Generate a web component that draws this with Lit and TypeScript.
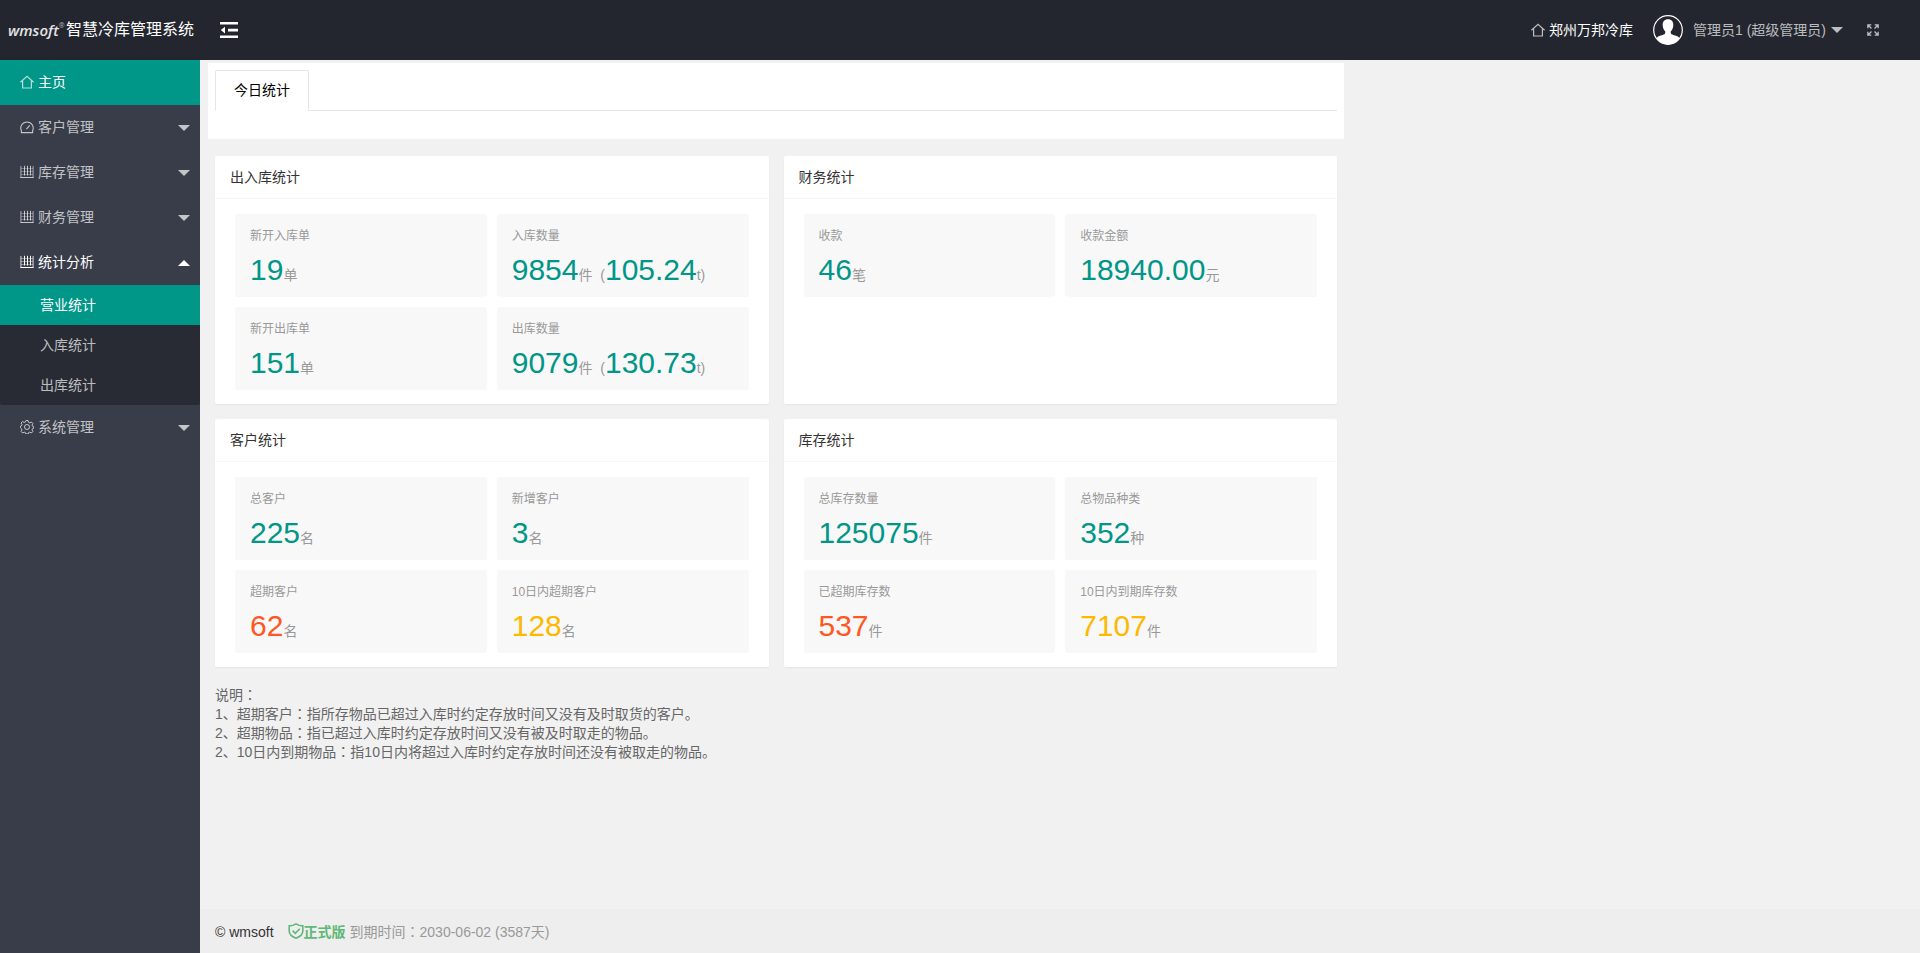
import { LitElement, html, css, svg, nothing } from "lit";
import { customElement, property, state } from "lit/decorators.js";
import { classMap } from "lit/directives/class-map.js";

const ICONS: Record<string, unknown> = {
  home: svg`<path stroke-width="1.200" d="M.4 7.300 7 1.300 13.600 7.300M2.600 5.800v7.200h8.800v-7.200" />`,
  gauge: svg`<path stroke-width="1.100" d="M1.400 10.800A6.200 6.200 0 1 1 12.600 10.800M.8 12.600h12.400M1.400 10.500v2M12.600 10.500v2M6.400 9.200l3.400-3.800" />`,
  table: svg`<path d="M.9 1v12M13.100 1v12" stroke-width=".8" /><path d="M.6 12.500h12.800" /><path d="M4.500 .8v9.700M7.500 .8v9.700M10.500 .8v9.700" /><path d="M1 3.500h12M1 6.500h12M1 9.500h12" stroke-width=".4" />`,
  gear: svg`<circle cx="7" cy="7" r="2.500" /><path d="M5.900 .6h2.200l.5 1.800 1.200.5 1.600-.9 1.500 1.500-.9 1.600.5 1.200 1.300.5v1.400l-1.300.5-.5 1.200.9 1.600-1.500 1.500-1.600-.9-1.200.5-.5 1.400H5.900l-.5-1.400-1.200-.5-1.600.9-1.500-1.500.9-1.600-.5-1.200L.4 7.700V6.300l1.100-.5.500-1.200-.9-1.600 1.500-1.500 1.600.9 1.200-.5z" />`,
  full: svg`<path stroke-width="1.500" d="M1 5V1h4M9 1h4v4M13 9v4H9M5 13H1V9M1.500 1.500l3.700 3.700M12.500 1.500 8.800 5.200M12.500 12.500 8.800 8.800M1.500 12.500l3.700-3.700" />`,
};

const icon = (name: string) =>
  html`<svg class="icon" viewBox="0 0 14 14" aria-hidden="true">${ICONS[name]}</svg>`;

// Full-width colons sit in the middle of their cell.
const withColons = (text: string) =>
  text.split("：").map((part, i) => (i ? html`<span class="colon">：</span>${part}` : part));

interface NavItem {
  label: string;
  icon: string;
  children?: string[];
}

interface Stat {
  label: string;
  parts: [string, string][];
  tone?: "danger" | "warn";
}

interface Group {
  title: string;
  stats: Stat[];
}

const NAV: NavItem[] = [
  { label: "客户管理", icon: "gauge" },
  { label: "库存管理", icon: "table" },
  { label: "财务管理", icon: "table" },
  { label: "统计分析", icon: "table", children: ["营业统计", "入库统计", "出库统计"] },
  { label: "系统管理", icon: "gear" },
];

const GROUPS: Group[] = [
  {
    title: "出入库统计",
    stats: [
      { label: "新开入库单", parts: [["19", "单"]] },
      { label: "入库数量", parts: [["9854", "件\u00a0\u00a0("], ["105.24", "t)"]] },
      { label: "新开出库单", parts: [["151", "单"]] },
      { label: "出库数量", parts: [["9079", "件\u00a0\u00a0("], ["130.73", "t)"]] },
    ],
  },
  {
    title: "财务统计",
    stats: [
      { label: "收款", parts: [["46", "笔"]] },
      { label: "收款金额", parts: [["18940.00", "元"]] },
    ],
  },
  {
    title: "客户统计",
    stats: [
      { label: "总客户", parts: [["225", "名"]] },
      { label: "新增客户", parts: [["3", "名"]] },
      { label: "超期客户", parts: [["62", "名"]], tone: "danger" },
      { label: "10日内超期客户", parts: [["128", "名"]], tone: "warn" },
    ],
  },
  {
    title: "库存统计",
    stats: [
      { label: "总库存数量", parts: [["125075", "件"]] },
      { label: "总物品种类", parts: [["352", "种"]] },
      { label: "已超期库存数", parts: [["537", "件"]], tone: "danger" },
      { label: "10日内到期库存数", parts: [["7107", "件"]], tone: "warn" },
    ],
  },
];

const NOTES = [
  "说明：",
  "1、超期客户：指所存物品已超过入库时约定存放时间又没有及时取货的客户。",
  "2、超期物品：指已超过入库时约定存放时间又没有被及时取走的物品。",
  "2、10日内到期物品：指10日内将超过入库时约定存放时间还没有被取走的物品。",
];

const base = css`
  * {
    box-sizing: border-box;
  }
  a {
    color: inherit;
    text-decoration: none;
  }
  button {
    font: inherit;
    color: inherit;
    background: none;
    border: 0;
    padding: 0;
    cursor: pointer;
  }
  h2,
  h3,
  p,
  ul {
    margin: 0;
    padding: 0;
    font-weight: normal;
    list-style: none;
  }
  .icon {
    display: block;
    flex: none;
    width: 14px;
    height: 14px;
    fill: none;
    stroke: currentColor;
  }
  .caret {
    flex: none;
    width: 0;
    height: 0;
    border: 6px solid transparent;
    border-top-color: currentColor;
    border-bottom-width: 0;
  }
  .caret.up {
    border-width: 0 6px 6px;
    border-bottom-color: currentColor;
  }
`;

@customElement("top-bar")
class TopBar extends LitElement {
  static styles = [
    base,
    css`
      :host {
        display: flex;
        align-items: center;
        height: 60px;
        background: #23262e;
        color: rgba(255, 255, 255, 0.7);
      }
      .brand {
        display: flex;
        align-items: center;
        width: 200px;
        padding-left: 8px;
        color: #fff;
        font-size: 16px;
        line-height: 24px;
        white-space: nowrap;
      }
      .mark {
        display: flex;
        width: 58px;
        font: italic 600 15px/24px "Open Sans", "Noto Sans", sans-serif;
        color: #e4e4e6;
      }
      .reg {
        font-size: 7px;
        line-height: 16px;
        color: #aaa;
      }
      .toggle {
        margin-left: 20px;
        color: #fff;
      }
      .toggle svg {
        display: block;
        width: 18px;
        height: 16px;
        fill: currentColor;
      }
      .right {
        display: flex;
        align-items: center;
        margin-left: auto;
        padding-right: 41px;
      }
      .site,
      .user {
        display: flex;
        align-items: center;
        line-height: 20px;
      }
      .site {
        gap: 4px;
        margin-right: 20px;
      }
      .site span {
        color: #fff;
      }
      .user {
        gap: 10px;
        margin-right: 24px;
      }
      .name {
        display: flex;
        align-items: center;
        gap: 5px;
      }
      .avatar {
        width: 30px;
        height: 30px;
      }
      .full .icon {
        width: 12px;
        height: 12px;
      }
    `,
  ];

  render() {
    return html`
      <a class="brand" href="#">
        <span class="mark">wmsoft<span class="reg">®</span></span>智慧冷库管理系统
      </a>
      <button class="toggle" aria-label="折叠菜单">
        <svg viewBox="0 0 18 16" aria-hidden="true">
          <path d="M0 0h18v2.6H0zM8 6.8h10v2.6H8zM0 13.4h18V16H0zM5 4.8v6.6L.8 8.1z" />
        </svg>
      </button>
      <div class="right">
        <a class="site" href="#">${icon("home")}<span>郑州万邦冷库</span></a>
        <button class="user">
          <svg class="avatar" viewBox="0 0 30 30" aria-hidden="true">
            <circle cx="15" cy="15" r="14.3" fill="none" stroke="#fff" stroke-width="1.2" />
            <path
              fill="#fff"
              d="M15 4.200c3.500 0 5.400 2.200 5.300 5.800-.1 2.800-1 5-2.600 6.500 0 1.800.3 2.600 1.500 3.100 2.400 1 5.300 1.200 7.300 3.400A14 14 0 0 1 15 29.500 14 14 0 0 1 3.500 23c2-2.200 4.900-2.400 7.300-3.400 1.200-.5 1.500-1.300 1.500-3.100-1.600-1.500-2.500-3.700-2.600-6.500-.1-3.600 1.800-5.800 5.300-5.800z"
            />
          </svg>
          <span class="name">管理员1 (超级管理员)<i class="caret"></i></span>
        </button>
        <button class="full" aria-label="全屏">${icon("full")}</button>
      </div>
    `;
  }
}

@customElement("side-nav")
class SideNav extends LitElement {
  @state() private open = "统计分析";

  static styles = [
    base,
    css`
      :host {
        display: block;
        flex: none;
        width: 200px;
        background: #393d49;
        color: rgba(255, 255, 255, 0.7);
      }
      .item {
        display: flex;
        align-items: center;
        gap: 4px;
        width: 100%;
        height: 45px;
        padding: 0 10px 2px 20px;
        line-height: 20px;
        text-align: left;
      }
      .item .caret {
        margin: 2px 0 0 auto;
      }
      .item.open {
        color: #fff;
      }
      .home {
        background: #009688;
      }
      .home span {
        color: #fff;
      }
      .sub {
        background: #282b33;
        border-radius: 2px;
      }
      .child {
        display: block;
        padding: 10px 40px;
        line-height: 20px;
      }
      .child.active {
        background: #009688;
        color: #fff;
      }
    `,
  ];

  render() {
    return html`
      <nav>
        <a class="item home" href="#">${icon("home")}<span>主页</span></a>
        ${NAV.map((item) => {
          const open = item.label === this.open;
          return html`
            <button
              class=${classMap({ item: true, open })}
              aria-expanded=${open}
              @click=${() => (this.open = open ? "" : item.label)}
            >
              ${icon(item.icon)}<span>${item.label}</span>
              <i class=${classMap({ caret: true, up: open })}></i>
            </button>
            ${open && item.children
              ? html`<ul class="sub">
                  ${item.children.map(
                    (child, i) => html`<li>
                      <a class=${classMap({ child: true, active: i === 0 })} href="#">${child}</a>
                    </li>`
                  )}
                </ul>`
              : nothing}
          `;
        })}
      </nav>
    `;
  }
}

@customElement("stat-card")
class StatCard extends LitElement {
  @property({ attribute: false }) group!: Group;

  static styles = [
    base,
    css`
      :host {
        display: block;
        background: #fff;
        border-radius: 2px;
        box-shadow: 0 1px 2px rgba(0, 0, 0, 0.05);
      }
      .title {
        padding: 0 15px;
        border-bottom: 1px solid #f6f6f6;
        color: #333;
        font-size: 14px;
        line-height: 42px;
      }
      .tiles {
        display: grid;
        grid-template-columns: 1fr 1fr;
        gap: 10px;
        padding: 15px 20px 14px;
      }
      .tile {
        padding: 12px 15px 3px;
        background: #f8f8f8;
        border-radius: 2px;
        color: #999;
      }
      .label {
        font-size: 12px;
        line-height: 20px;
      }
      .value {
        height: 48px;
        line-height: 48px;
        white-space: nowrap;
      }
      .num {
        color: #009688;
        font-size: 30px;
      }
      .danger .num {
        color: #ff5722;
      }
      .warn .num {
        color: #ffb800;
      }
    `,
  ];

  render() {
    return html`
      <h2 class="title">${this.group.title}</h2>
      <div class="tiles">
        ${this.group.stats.map(
          (s) => html`<div class=${classMap({ tile: true, [s.tone ?? "normal"]: true })}>
            <h3 class="label">${s.label}</h3>
            <p class="value">${s.parts.map(([n, unit]) => html`<span class="num">${n}</span>${unit}`)}</p>
          </div>`
        )}
      </div>
    `;
  }
}

@customElement("app-root")
class AppRoot extends LitElement {
  static styles = [
    base,
    css`
      :host {
        display: flex;
        flex-direction: column;
        min-height: 100vh;
        background: #f1f1f1;
        color: #666;
        font: 14px/19px "Liberation Sans", "Noto Sans CJK SC", sans-serif;
      }
      .body {
        display: flex;
        flex: 1;
      }
      .main {
        display: flex;
        flex: 1;
        flex-direction: column;
        min-width: 0;
      }
      .content {
        flex: 1;
        width: 100%;
        max-width: 1152px;
        padding: 3px 8px 20px;
      }
      .panel {
        height: 76px;
        padding: 7px 7px 0;
        background: #fff;
      }
      .tabs {
        display: flex;
        height: 41px;
        border-bottom: 1px solid #e6e6e6;
      }
      .tab {
        height: 41px;
        padding: 0 18px;
        border: 1px solid #e6e6e6;
        border-bottom-color: #fff;
        border-radius: 2px 2px 0 0;
        color: #000;
        line-height: 39px;
      }
      .cards {
        display: grid;
        grid-template-columns: 1fr 1fr;
        gap: 15px;
        padding: 17px 7px 19px;
      }
      .notes {
        padding: 0 7px;
      }
      .colon {
        font-family: "Liberation Sans", "Noto Sans CJK JP", sans-serif;
      }
      .footer {
        display: flex;
        align-items: center;
        height: 44px;
        padding: 2px 15px 0;
        background: #eee;
        color: #999;
        line-height: 20px;
      }
      .copy {
        margin-right: 14px;
        color: #333;
      }
      .edition {
        display: flex;
        align-items: center;
        margin-right: 4px;
        color: #5fb878;
        font-weight: bold;
      }
      .shield {
        width: 16px;
        height: 18px;
        fill: none;
        stroke: currentColor;
        stroke-width: 1.6;
      }
    `,
  ];

  render() {
    return html`
      <top-bar></top-bar>
      <div class="body">
        <side-nav></side-nav>
        <div class="main">
          <main class="content">
            <div class="panel">
              <div class="tabs" role="tablist">
                <button class="tab" role="tab" aria-selected="true">今日统计</button>
              </div>
            </div>
            <div class="cards">
              ${GROUPS.map((g) => html`<stat-card .group=${g}></stat-card>`)}
            </div>
            <div class="notes">${NOTES.map((n) => html`<p>${withColons(n)}</p>`)}</div>
          </main>
          <footer class="footer">
            <span class="copy">© wmsoft</span>
            <span class="edition">
              <svg class="shield" viewBox="0 1 16 16" aria-hidden="true">
                <path d="M8 .9c2 1.400 4.300 2 6.800 2v5.200c0 3.300-2.600 5.600-6.800 7.100-4.200-1.500-6.800-3.800-6.800-7.100V2.900c2.500 0 4.800-.6 6.800-2zM4.600 7.600l2.700 2.700 4.500-4.500" />
              </svg>正式版
            </span>
            <span>${withColons("到期时间：2030-06-02 (3587天)")}</span>
          </footer>
        </div>
      </div>
    `;
  }
}
